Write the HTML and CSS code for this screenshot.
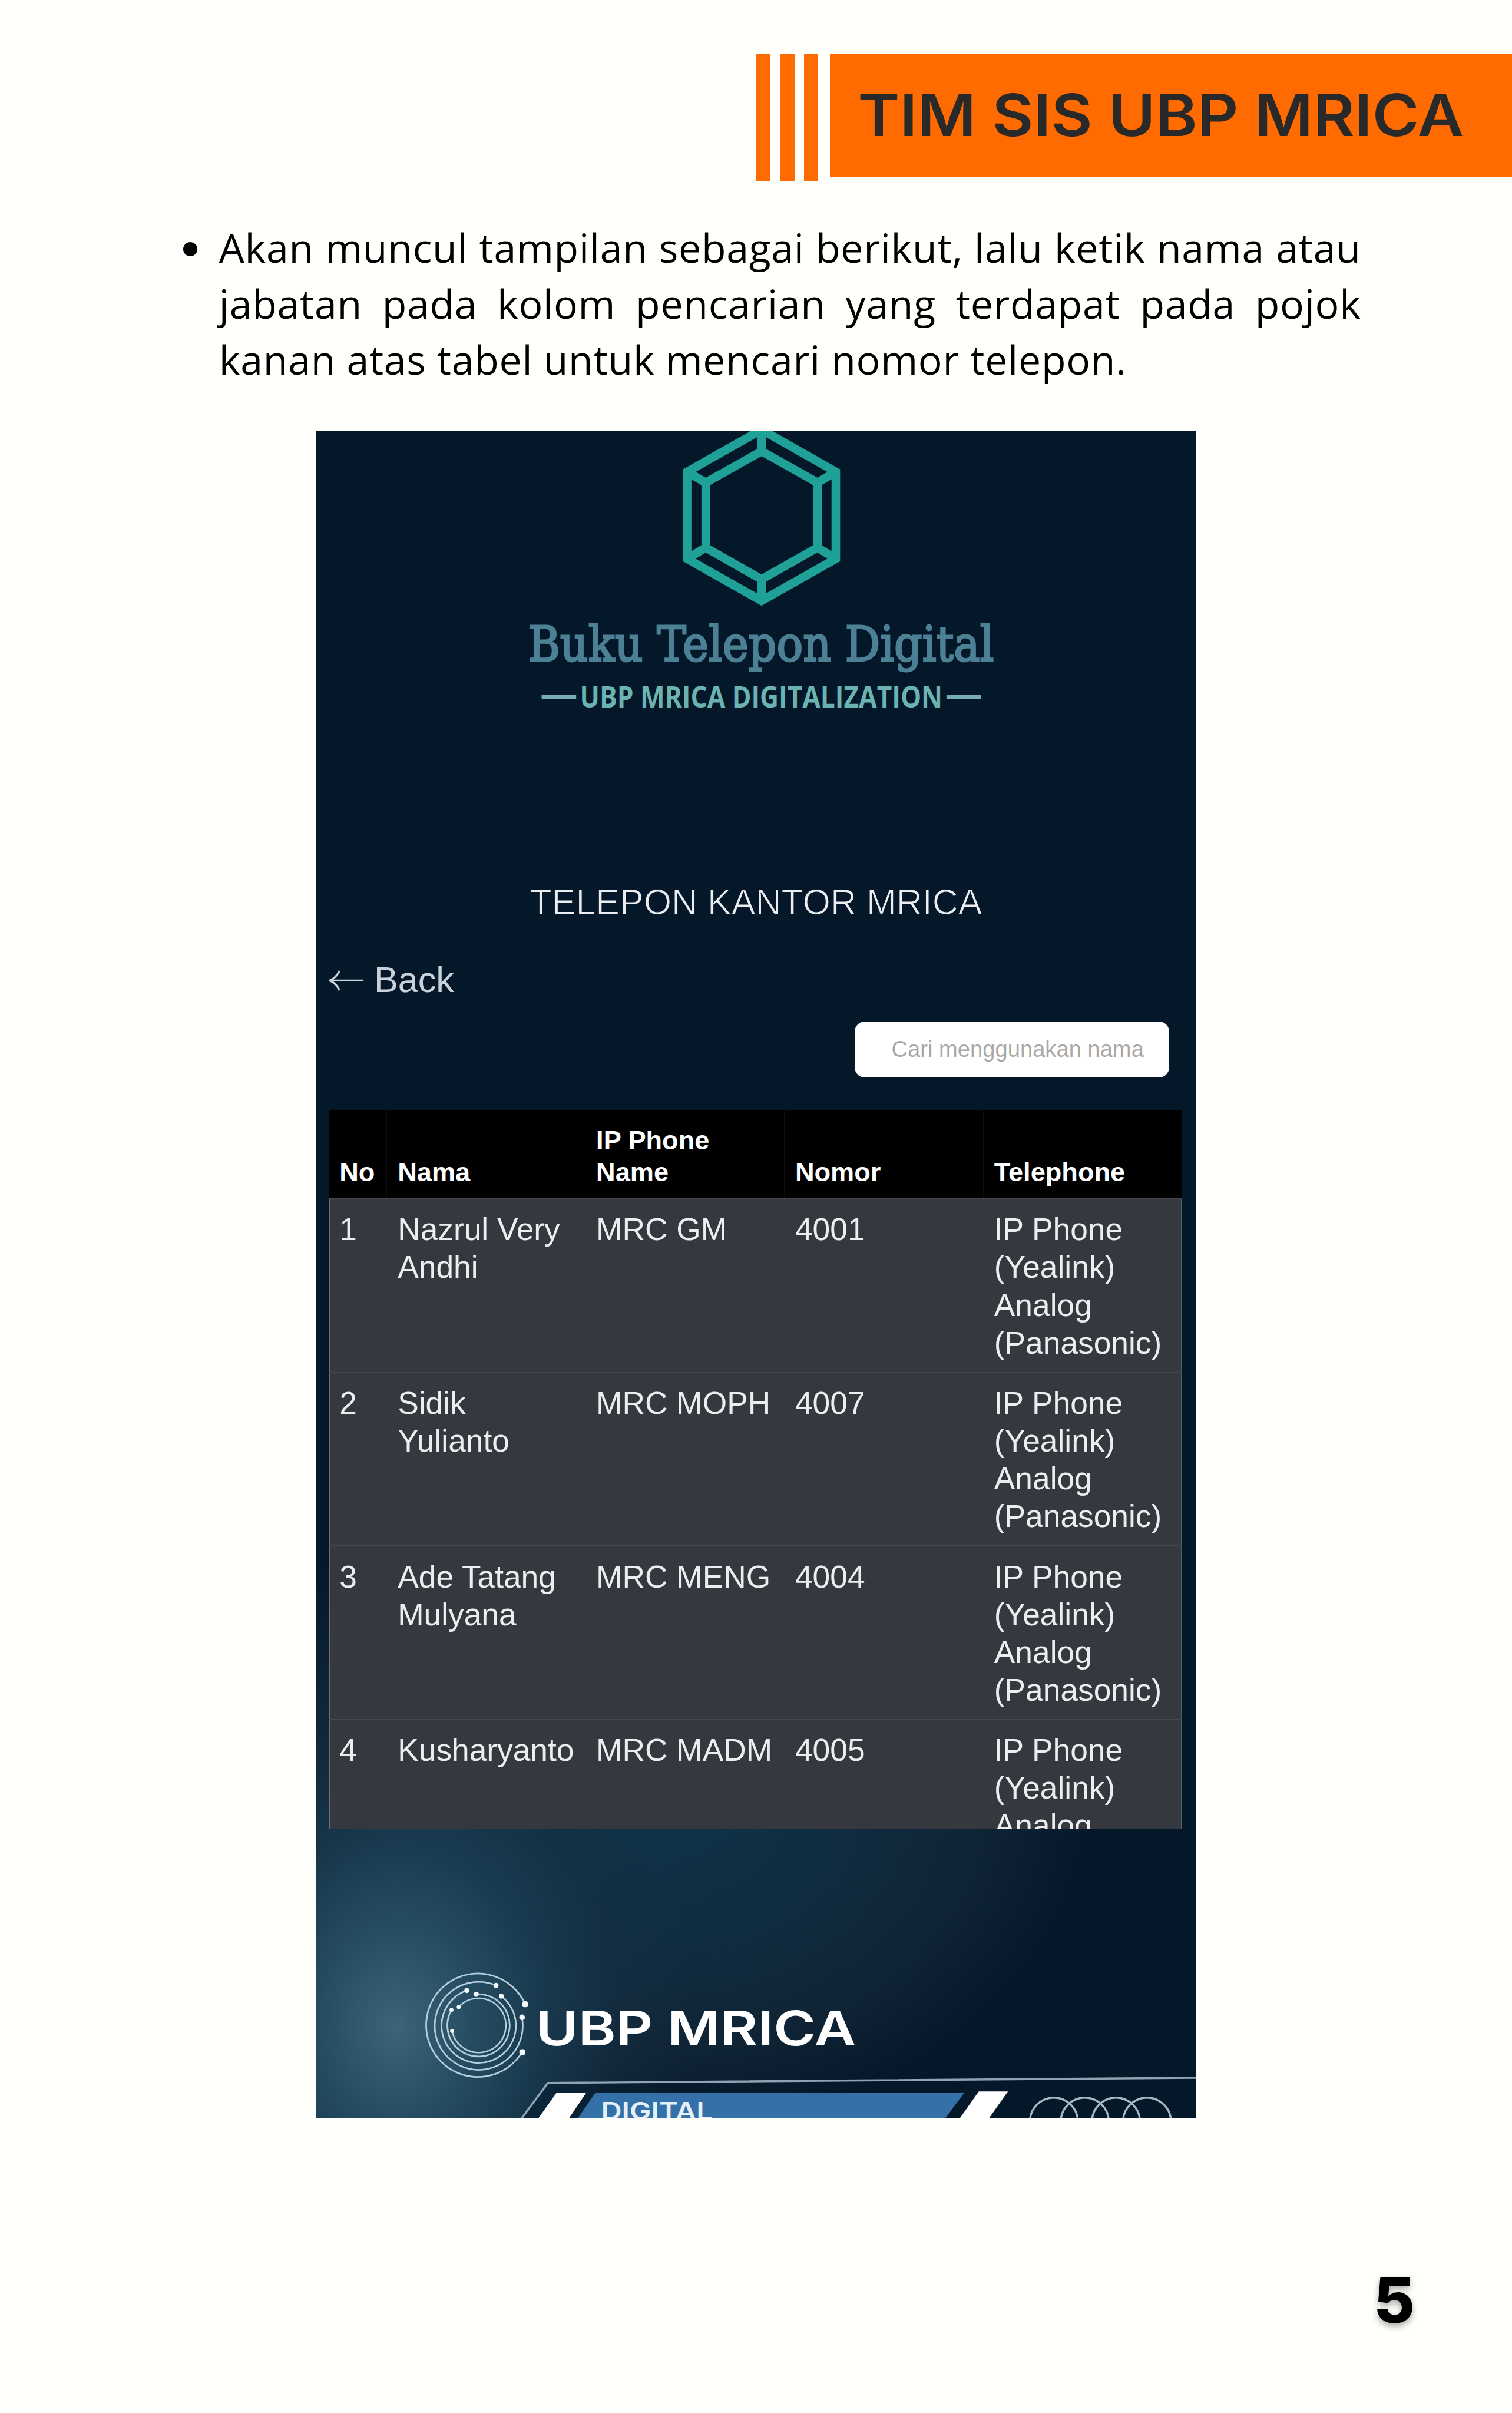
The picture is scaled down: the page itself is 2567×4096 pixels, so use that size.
FILE: index.html
```html
<!DOCTYPE html>
<html lang="id">
<head>
<meta charset="utf-8">
<title>Tim SIS UBP Mrica</title>
<link rel="stylesheet" href="styles.css">
</head>
<body>
<div class="page">
  <header class="header">
    <div class="stripes"><i class="stripe"></i><i class="stripe"></i><i class="stripe"></i></div>
    <div class="banner">
      <svg class="banner-title" viewBox="0 0 1060 100"><text x="-4" y="86" textLength="1060" lengthAdjust="spacingAndGlyphs">TIM SIS UBP MRICA</text></svg>
    </div>
  </header>

  <ul class="steps">
    <li class="step">
      <span class="bullet"></span>
      <p class="step-text">
        <span class="line full">Akan muncul tampilan sebagai berikut, lalu ketik nama atau</span>
        <span class="line full">jabatan pada kolom pencarian yang terdapat pada pojok</span>
        <span class="line last">kanan atas tabel untuk mencari nomor telepon.</span>
      </p>
    </li>
  </ul>

  <main class="phone">
    <svg class="brand" viewBox="552 753 1540 520">
      <g class="gem">
        <path d="M1331.7 751.4 1461.5 825V977L1331.7 1050.6 1201.5 977V825Z"/>
        <path d="M1331.7 789 1429.5 844V957.5L1331.7 1013 1234 957.5V844Z"/>
        <path d="M1331.7 751V789M1331.7 1013V1050M1201.5 825 1234 844M1461.5 825 1429.5 844M1201.5 977 1234 957.5M1461.5 977 1429.5 957.5"/>
      </g>
      <text class="brand-name" x="923" y="1156" textLength="815" lengthAdjust="spacingAndGlyphs">Buku Telepon Digital</text>
      <text class="brand-sub" x="1014" y="1237" textLength="634" lengthAdjust="spacingAndGlyphs">UBP MRICA DIGITALIZATION</text>
      <path class="dash" d="M947 1218.500H1007.500M1655 1218.500H1715"/>
    </svg>

    <h1 class="title">TELEPON KANTOR MRICA</h1>

    <a class="back">
      <svg class="back-arrow" viewBox="0 0 62 40"><path d="M61 20H3M19 3Q13 15 2 20Q13 25 19 37"/></svg>
      <span>Back</span>
    </a>

    <div class="search"><span class="placeholder">Cari menggunakan nama</span></div>

    <div class="table">
      <div class="row head">
        <div class="cell">No</div><div class="cell">Nama</div><div class="cell">IP Phone<br>Name</div><div class="cell">Nomor</div><div class="cell">Telephone</div>
      </div>
      <div class="row">
        <div class="cell">1</div><div class="cell">Nazrul Very<br>Andhi</div><div class="cell">MRC GM</div><div class="cell">4001</div><div class="cell">IP Phone<br>(Yealink)<br>Analog<br>(Panasonic)</div>
      </div>
      <div class="row">
        <div class="cell">2</div><div class="cell">Sidik<br>Yulianto</div><div class="cell">MRC MOPH</div><div class="cell">4007</div><div class="cell">IP Phone<br>(Yealink)<br>Analog<br>(Panasonic)</div>
      </div>
      <div class="row">
        <div class="cell">3</div><div class="cell">Ade Tatang<br>Mulyana</div><div class="cell">MRC MENG</div><div class="cell">4004</div><div class="cell">IP Phone<br>(Yealink)<br>Analog<br>(Panasonic)</div>
      </div>
      <div class="row">
        <div class="cell">4</div><div class="cell">Kusharyanto</div><div class="cell">MRC MADM</div><div class="cell">4005</div><div class="cell">IP Phone<br>(Yealink)<br>Analog</div>
      </div>
    </div>

    <svg class="footer" viewBox="552 3198 1540 506">
      <g class="rings">
        <path d="M918.3 3504A90.500 90.500 0 1 0 913.400 3587"/>
        <path d="M867.300 3471A77 77 0 1 0 912.800 3528"/>
        <path d="M816.300 3480A65 65 0 1 0 876.600 3490"/>
        <path d="M789.400 3514A54.500 54.500 0 1 0 832.700 3486.700"/>
        <path d="M802 3509A47.500 47.500 0 1 1 790.500 3551"/>
      </g>
      <g class="dots">
        <circle cx="918.3" cy="3504" r="5.500"/><circle cx="913.400" cy="3588" r="5.500"/>
        <circle cx="867.300" cy="3471" r="4.500"/><circle cx="912.800" cy="3527" r="5"/>
        <circle cx="816.300" cy="3480" r="4.500"/><circle cx="876.600" cy="3490" r="4.500"/>
        <circle cx="789.400" cy="3514" r="3.500"/><circle cx="832.700" cy="3486.700" r="4.500"/>
        <circle cx="802" cy="3509" r="3.500"/><circle cx="790.500" cy="3550.700" r="3.500"/>
      </g>
      <text class="logo-text" x="937" y="3576" textLength="560" lengthAdjust="spacingAndGlyphs">UBP MRICA</text>
      <path class="frame-fill" d="M912 3704 958 3642 2092 3633V3704Z"/>
      <path class="frame" d="M911 3705 958 3641.700 2093 3632.700"/>
      <path class="white" d="M973 3659H1025L994.500 3704H941ZM1711.500 3656.500H1762.500L1729 3704H1678Z"/>
      <path class="blue" d="M1041 3659H1686L1652.600 3704H1010Z"/>
      <text class="digital" x="1051" y="3706" textLength="195" lengthAdjust="spacingAndGlyphs">DIGITAL</text>
      <g class="loops">
        <circle cx="1842.800" cy="3709.500" r="42"/><circle cx="1896.900" cy="3709.500" r="42"/><circle cx="1951.400" cy="3709.500" r="42"/><circle cx="2005.700" cy="3709.500" r="42"/>
      </g>
    </svg>
  </main>

  <div class="page-number">5</div>
</div>
</body>
</html>
```
FILE: styles.css
```css
/* 1rem = 10 design units on a 2644-unit wide page */
html { font-size: 9.7087px; }
* { box-sizing: border-box; }
body { margin: 0; background: #fffffb; }

.page {
  width: 100%;
  height: 4096px;
  overflow: hidden;
  background: #fffffb;
  display: flex;
  flex-direction: column;
}

.header {
  display: flex;
  align-items: flex-start;
  margin: 9.4rem 0 0 132.2rem;
  height: 22.2rem;
}
.stripes { display: flex; gap: 1.7rem; margin-right: 2rem; }
.stripe { width: 2.5rem; height: 22.2rem; background: #ff6b00; }
.banner {
  flex: 1;
  height: 21.6rem;
  background: #ff6b00;
  padding: 5.7rem 0 0 5.3rem;
}
.banner-title { display: block; width: 106rem; height: 10rem; overflow: visible; }
.banner-title text { font: 600 101.500px Inter, sans-serif; fill: #292929; }

.steps { list-style: none; margin: 6.85rem 0 0; padding: 0 0 0 32rem; }
.step { display: flex; }
.bullet { width: 2.5rem; height: 2.5rem; margin: 3.9rem 3.8rem 0 0; border-radius: 50%; background: #000; }
.step-text { width: 199.700rem; margin: 0; font: 400 7rem/9.75rem "Open Sans", sans-serif; letter-spacing: .075rem; color: #000; }
.line { display: block; white-space: nowrap; }
.full { text-align: justify; text-align-last: justify; white-space: normal; }

.phone {
  width: 154rem;
  height: 295.1rem;
  margin: 7.6rem 0 0 55.2rem;
  overflow: hidden;
  display: flex;
  flex-direction: column;
  font-family: "Liberation Sans", sans-serif;
  color: #ebedee;
  background:
    radial-gradient(52rem 66rem at 14rem 279rem, #3c6378 0%, rgba(42, 82, 104, .9) 25%, rgba(28, 64, 86, .7) 50%, rgba(24, 48, 68, .4) 75%, rgba(4, 24, 41, 0) 100%),
    radial-gradient(78rem 60rem at 58rem 238rem, #0f344a 0%, rgba(17, 46, 66, .92) 45%, rgba(19, 40, 57, .75) 75%, rgba(4, 24, 41, 0) 100%),
    #041829;
}
.brand { display: block; width: 154rem; height: 52rem; flex: none; }
.gem { fill: none; stroke: #20a197; stroke-width: 15; }
.brand-name { font: 400 85px "DejaVu Serif", serif; fill: #4c8195; stroke: #4c8195; stroke-width: 3; }
.brand-sub { font: 700 51px "Open Sans", sans-serif; fill: #6bb3b0; }
.dash { stroke: #74aeb4; stroke-width: 7; }

.title {
  margin: 26.9rem 0 0;
  text-align: center;
  font-size: 6.28rem;
  line-height: 7.2rem;
  font-weight: 400;
  -webkit-text-stroke: .12rem #041829;
}
.back { display: flex; align-items: center; gap: 1.7rem; margin: 6.1rem 0 0 2.3rem; font-size: 6.3rem; line-height: 7.8rem; color: #c9d2d9; }
.back-arrow { width: 6.2rem; height: 4rem; fill: none; stroke: #c9d2d9; stroke-width: 3.500; }
.search {
  align-self: flex-end;
  width: 55rem;
  height: 9.9rem;
  margin: 3.3rem 4.7rem 0 0;
  padding-left: 6.4rem;
  display: flex;
  align-items: center;
  border-radius: 1.8rem;
  background: #fff;
}
.placeholder { font-size: 3.93rem; line-height: 5rem; color: #a8a8a8; white-space: nowrap; }

.table { width: 149.2rem; height: 125.7rem; margin: 5.700rem 0 0 2.3rem; overflow: hidden; flex: none; }
.row {
  display: grid;
  grid-template-columns: 10.2rem 34.700rem 34.800rem 34.800rem 1fr;
  height: 30.35rem;
  padding-top: 2rem;
  border-top: .3rem solid #45494f;
  background: #35393f;
  box-shadow: inset .2rem 0 #6f7479, inset -.2rem 0 #5b6066;
  font-size: 5.49rem;
  line-height: 6.6rem;
}
.cell { padding-left: 1.85rem; white-space: nowrap; }
.head {
  height: 15.4rem;
  padding: 0;
  border: 0;
  background: #000;
  box-shadow: none;
  font-size: 4.65rem;
  line-height: 5.5rem;
  font-weight: 700;
  color: #fff;
}
.head .cell { display: flex; align-items: flex-end; padding-bottom: 1.85rem; border-right: .1rem solid #0c0c0c; }

.footer { display: block; width: 154rem; height: 50.600rem; flex: none; }
.rings { fill: none; stroke: #b4cfdd; stroke-width: 2.800; }
.dots { fill: #f4fafc; }
.logo-text { font: 600 84px Inter, sans-serif; fill: #fff; }
.frame-fill { fill: #041829; opacity: .5; }
.frame { fill: none; stroke: #8fa3b2; stroke-width: 3.500; }
.white { fill: #fff; }
.blue { fill: #3471a8; }
.digital { font: 600 42px Inter, sans-serif; fill: #e6f0f8; }
.loops { fill: none; stroke: #a9b7c3; stroke-width: 3.500; }

.page-number {
  margin: 24.3rem 0 0 240.200rem;
  font: 800 11.1rem/15rem Inter, sans-serif;
  color: #000;
  text-shadow: 0 .5rem 1.2rem rgba(0, 0, 0, .35);
}
```
